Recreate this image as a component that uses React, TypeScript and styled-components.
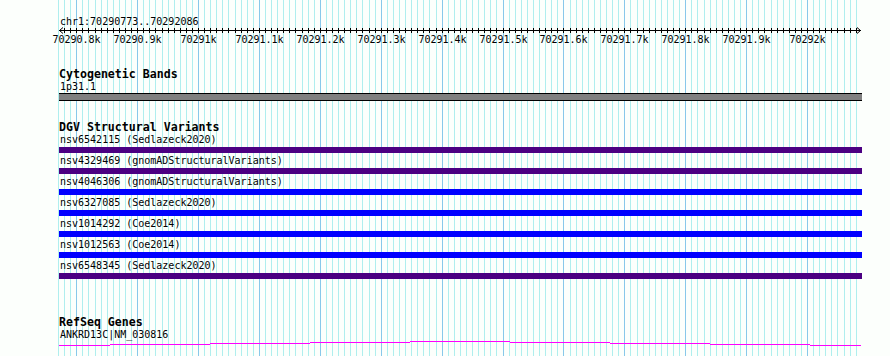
import React from 'react';
import styled, { createGlobalStyle } from 'styled-components';

const START = 70290773;
const END = 70292086;
const ORIGIN = 59.8;
const SCALE = 0.609;
const PANEL_LEFT = 59;

const toX = (bp: number) => ORIGIN + (bp - START) * SCALE;

const fmtK = (bp: number) => {
   const whole = Math.floor(bp / 1000);
   const frac = Math.round((bp % 1000) / 100);
   return frac ? `${whole}.${frac}k` : `${whole}k`;
};

const minorTicks: number[] = [];
for (let bp = Math.ceil((START - 3) / 10) * 10; bp <= END; bp += 10) minorTicks.push(bp);
const majorTicks = minorTicks.filter((bp) => bp % 100 === 0);

const variants = [
   { name: 'nsv6542115', source: 'Sedlazeck2020', color: '#4b0082' },
   { name: 'nsv4329469', source: 'gnomADStructuralVariants', color: '#4b0082' },
   { name: 'nsv4046306', source: 'gnomADStructuralVariants', color: '#0000ff' },
   { name: 'nsv6327085', source: 'Sedlazeck2020', color: '#0000ff' },
   { name: 'nsv1014292', source: 'Coe2014', color: '#0000ff' },
   { name: 'nsv1012563', source: 'Coe2014', color: '#0000ff' },
   { name: 'nsv6548345', source: 'Sedlazeck2020', color: '#4b0082' },
];

// page x start, page x end, page y row
const geneSegments: [number, number, number][] = [
   [59, 110, 345],
   [110, 210, 344],
   [210, 310, 343],
   [310, 410, 342],
   [410, 510, 341],
   [510, 610, 342],
   [610, 710, 343],
   [710, 810, 344],
   [810, 861, 345],
];

const GlobalStyle = createGlobalStyle`
   html, body {
      margin: 0;
      padding: 0;
      background: #fcfffc;
   }
   body {
      font-family: "DejaVu Sans Mono", "Liberation Mono", monospace;
      font-size: 10px;
      color: #000;
   }
`;

const Page = styled.div`
   position: relative;
   width: 890px;
   height: 356px;
   overflow: hidden;
`;

const GridLayer = styled.svg`
   position: absolute;
   left: 0;
   top: 0;
   width: 890px;
   height: 356px;
`;

const Panel = styled.div`
   position: relative;
   margin-left: ${PANEL_LEFT}px;
   width: 803px;
   display: flex;
   flex-direction: column;
`;

const Ruler = styled.div`
   display: flex;
   flex-direction: column;
   padding-top: 16px;
`;

const Location = styled.div`
   line-height: 11px;
   height: 11px;
   padding-left: 1px;
`;

const Axis = styled.svg`
   display: block;
   width: 803px;
   height: 7px;
`;

const TickLabels = styled.div`
   position: relative;
   height: 11px;
   line-height: 11px;
`;

const TickLabel = styled.span`
   position: absolute;
   top: 0;
   transform: translateX(-50%);
   white-space: nowrap;
`;

const Track = styled.div<{ $gap: number }>`
   display: flex;
   flex-direction: column;
   margin-top: ${(p) => p.$gap}px;
`;

const TrackTitle = styled.div`
   font-weight: bold;
   font-size: 11.6px;
   line-height: 13px;
   height: 13px;
`;

const FeatureLabel = styled.div`
   line-height: 12px;
   height: 12px;
   padding-left: 1px;
   white-space: pre;
`;

const BandBar = styled.div`
   height: 6px;
   background: #808080;
   border-top: 1px solid #000;
   border-bottom: 1px solid #000;
`;

const VariantRow = styled.div`
   display: flex;
   flex-direction: column;
   padding-bottom: 2px;
`;

const VariantBar = styled.div<{ $color: string }>`
   height: 6px;
   margin-top: 1px;
   background: ${(p) => p.$color};
`;

const GeneDrawing = styled.svg`
   display: block;
   width: 803px;
   height: 7px;
`;

const App = () => {
   return (
      <Page>
         <GlobalStyle />
         <GridLayer shapeRendering="crispEdges">
            {minorTicks.map((bp) => {
               const x = Math.round(toX(bp)) + 0.5;
               return (
                  <line
                     key={bp}
                     x1={x}
                     x2={x}
                     y1={0}
                     y2={356}
                     stroke={bp % 100 === 0 ? '#88c8ea' : '#afeeee'}
                     strokeWidth={1}
                  />
               );
            })}
         </GridLayer>
         <Panel>
            <Ruler>
               <Location>chr1:70290773..70292086</Location>
               <Axis shapeRendering="crispEdges">
                  <line x1={0} x2={802} y1={3.5} y2={3.5} stroke="#000" />
                  {minorTicks
                     .filter((bp) => toX(bp) > PANEL_LEFT + 2)
                     .map((bp) => {
                        const x = Math.round(toX(bp)) - PANEL_LEFT + 0.5;
                        return <line key={bp} x1={x} x2={x} y1={1} y2={6} stroke="#000" />;
                     })}
                  <path d="M4,0.5 L0.5,3.5 L4,6.5" fill="none" stroke="#000" shapeRendering="auto" />
                  <path d="M798,0.5 L801.5,3.5 L798,6.5" fill="none" stroke="#000" shapeRendering="auto" />
               </Axis>
               <TickLabels>
                  {majorTicks.map((bp) => (
                     <TickLabel key={bp} style={{ left: Math.round(toX(bp)) - PANEL_LEFT + 0.5 }}>
                        {fmtK(bp)}
                     </TickLabel>
                  ))}
               </TickLabels>
            </Ruler>

            <Track $gap={23}>
               <TrackTitle>Cytogenetic Bands</TrackTitle>
               <FeatureLabel>1p31.1</FeatureLabel>
               <BandBar />
            </Track>

            <Track $gap={20}>
               <TrackTitle>DGV Structural Variants</TrackTitle>
               {variants.map((v) => (
                  <VariantRow key={v.name}>
                     <FeatureLabel>{`${v.name} (${v.source})`}</FeatureLabel>
                     <VariantBar $color={v.color} />
                  </VariantRow>
               ))}
            </Track>

            <Track $gap={35}>
               <TrackTitle>RefSeq Genes</TrackTitle>
               <FeatureLabel>ANKRD13C|NM_030816</FeatureLabel>
               <GeneDrawing shapeRendering="crispEdges">
                  {geneSegments.map(([x1, x2, y], i) => (
                     <line
                        key={i}
                        x1={x1 - PANEL_LEFT}
                        x2={x2 - PANEL_LEFT}
                        y1={y - 341 + 0.5}
                        y2={y - 341 + 0.5}
                        stroke="#ff00ff"
                        strokeWidth={1}
                     />
                  ))}
               </GeneDrawing>
            </Track>
         </Panel>
      </Page>
   );
};

export default App;
